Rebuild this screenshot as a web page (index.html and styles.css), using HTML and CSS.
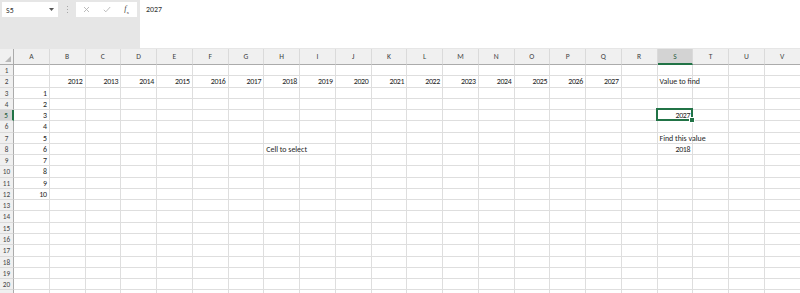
FILE: index.html
```html
<!DOCTYPE html>
<html>
<head>
<meta charset="utf-8">
<link rel="stylesheet" href="styles.css">
</head>
<body>
<div class="toolbar">
  <div class="namebox">
    <span>S5</span>
    <svg class="caret" width="5" height="3" viewBox="0 0 5 3"><path d="M0 0H5L2.5 3Z" fill="#555"/></svg>
  </div>
  <div class="grip"><i></i><i></i><i></i></div>
  <div class="fxbox">
    <svg width="7" height="7" viewBox="0 0 7 7"><path d="M1 1L6 6M6 1L1 6" stroke="#b4b4b4" stroke-width="0.9" fill="none"/></svg>
    <svg width="8" height="7" viewBox="0 0 8 7"><path d="M0.8 3.8L2.8 5.8L7.2 1" stroke="#b4b4b4" stroke-width="0.9" fill="none"/></svg>
    <span class="fx"><i>f</i><sub>x</sub></span>
  </div>
  <div class="formula">2027</div>
</div>
<div class="sheet" id="sheet"></div>
<script src="script.js"></script>
</body>
</html>
```
FILE: styles.css
```css
* { box-sizing: border-box; }
html, body { margin: 0; height: 100%; overflow: hidden; }
body {
  background: #fff;
  font-family: Calibri, Carlito, "Liberation Sans", Arial, sans-serif;
  font-size: 7.9px;
  color: #262626;
}
.toolbar {
  display: flex;
  align-items: flex-start;
  height: 49px;
  background: #e6e6e6;
}
.namebox {
  margin: 2px 0 0 2px;
  width: 56px;
  height: 15px;
  background: #fff;
  display: flex;
  align-items: center;
  justify-content: space-between;
  padding: 0 4px 0 4px;
  color: #333;
}
.grip {
  width: 18px;
  height: 15px;
  margin-top: 2px;
  display: flex;
  flex-direction: column;
  align-items: center;
  justify-content: center;
  gap: 2px;
}
.grip i {
  width: 1px;
  height: 1px;
  background: #a8a8a8;
  display: block;
}
.fxbox {
  margin-top: 2px;
  width: 61px;
  height: 15px;
  background: #fff;
  display: flex;
  align-items: center;
  justify-content: space-between;
  padding: 0 8px 0 7px;
}
.fx { color: #444; font-family: "Liberation Serif", serif; font-size: 8px; }
.fx sub { font-size: 5px; font-style: normal; }
.formula {
  margin-left: 3px;
  flex: 1;
  height: 48px;
  background: #fff;
  padding: 4px 6px;
  color: #333;
}
.sheet {
  display: grid;
  grid-template-columns: 14px repeat(22, 35.75px);
  grid-template-rows: 16px;
  grid-auto-rows: 11.27px;
}
.corner {
  background: #f0f0f0;
  border-right: 1px solid #ababab;
  border-bottom: 1px solid #ababab;
  position: relative;
}
.corner svg { position: absolute; right: 2px; bottom: 2px; }
.ch {
  background: #f0f0f0;
  border-bottom: 1px solid #ababab;
  border-right: 1px solid #dadada;
  color: #444;
  text-align: center;
  line-height: 16px;
  font-size: 7.6px;
}
.ch.act {
  background: #d3d3d3;
  border-bottom: 2px solid #217346;
  color: #1d5a38;
}
.rh {
  background: #f0f0f0;
  border-right: 1px solid #ababab;
  border-bottom: 1px solid #dadada;
  color: #444;
  text-align: center;
  line-height: 11px;
  font-size: 7.2px;
}
.rh.act {
  background: #d3d3d3;
  border-right: 2px solid #217346;
  color: #1d5a38;
}
.c {
  border-right: 1px solid #dedede;
  border-bottom: 1px solid #dedede;
  line-height: 11px;
  padding: 0 2px;
  white-space: nowrap;
  overflow: visible;
  position: relative;
}
.c.r { text-align: right; letter-spacing: -0.3px; }
.c.l { text-align: left; }
.c.sel::after {
  content: "";
  position: absolute;
  left: -2px;
  top: -2px;
  right: -1px;
  bottom: -1px;
  border: 2px solid #217346;
}
.c.sel::before {
  content: "";
  position: absolute;
  right: -3px;
  bottom: -3px;
  width: 4px;
  height: 4px;
  background: #217346;
  border: 1px solid #fff;
  z-index: 2;
}
```
FILE: script.js
```js
(function () {
  var cols = "ABCDEFGHIJKLMNOPQRSTUV".split("");
  var data = {};
  for (var i = 0; i < 16; i++) {
    data[cols[i + 1] + "2"] = [String(2012 + i), "r"];
  }
  for (var j = 1; j <= 10; j++) {
    data["A" + (j + 2)] = [String(j), "r"];
  }
  data["S2"] = ["Value to find", "l"];
  data["S5"] = ["2027", "r"];
  data["S7"] = ["Find this value", "l"];
  data["S8"] = ["2018", "r"];
  data["H8"] = ["Cell to select", "l"];

  var sheet = document.getElementById("sheet");
  var html = '<div class="corner"><svg width="6" height="6" viewBox="0 0 6 6"><path d="M6 0V6H0Z" fill="#b8b8b8"/></svg></div>';
  cols.forEach(function (c) {
    html += '<div class="ch' + (c === "S" ? " act" : "") + '">' + c + '</div>';
  });
  for (var r = 1; r <= 21; r++) {
    html += '<div class="rh' + (r === 5 ? " act" : "") + '">' + r + '</div>';
    cols.forEach(function (c) {
      var key = c + r;
      var d = data[key];
      var cls = "c";
      if (d) cls += " " + d[1];
      if (key === "S5") cls += " sel";
      html += '<div class="' + cls + '">' + (d ? d[0] : "") + '</div>';
    });
  }
  sheet.innerHTML = html;
})();
```
